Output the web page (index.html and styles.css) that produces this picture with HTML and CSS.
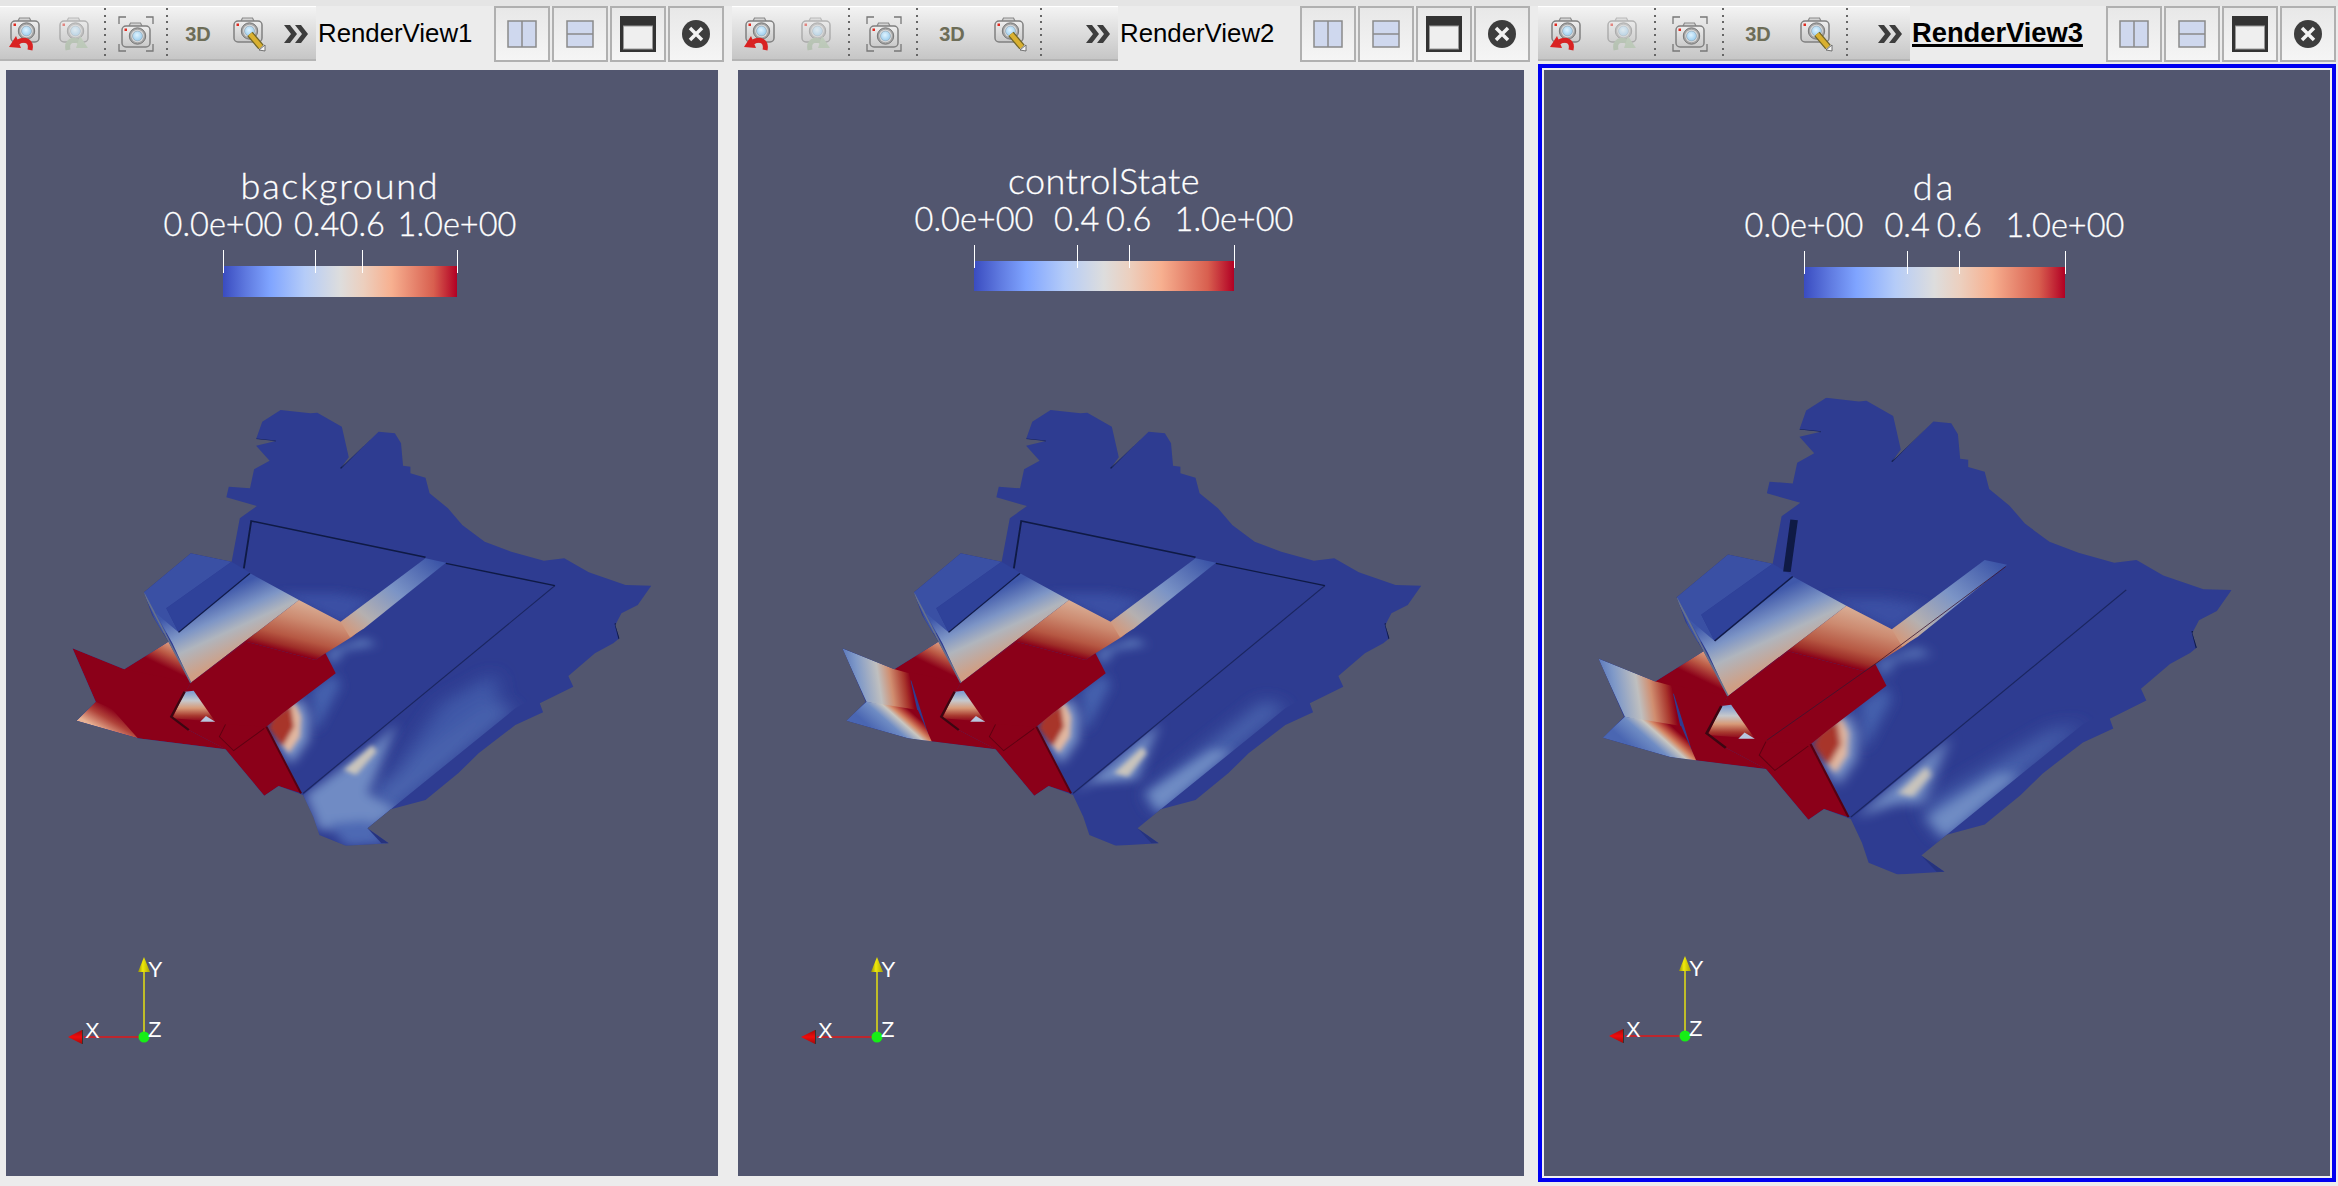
FILE: index.html
```html
<!DOCTYPE html>
<html lang="en">
<head>
    <meta charset="UTF-8">
    <title>ParaView RenderViews</title>
    <link rel="stylesheet" href="styles.css">
</head>
<body>
    <!-- shared drawings: toolbar icons, axes and the mesh -->
    <svg class="defs" aria-hidden="true">
        <defs>
            <linearGradient id="camBody" x1="0" y1="0" x2="0" y2="1">
                <stop offset="0" stop-color="#efefef"/>
                <stop offset="1" stop-color="#c9c9c9"/>
            </linearGradient>
            <radialGradient id="camLens" cx="0.45" cy="0.4" r="0.7">
                <stop offset="0" stop-color="#dff3ff"/>
                <stop offset="1" stop-color="#8fc6ea"/>
            </radialGradient>
            <symbol id="camera" viewBox="0 0 40 40">
                <path d="M13 8 L14.5 5 H24.5 L26 8" fill="#d4d4d4" stroke="#8a8a8a" stroke-width="1.2"/>
                <rect x="6" y="8" width="28" height="21" rx="4" fill="url(#camBody)" stroke="#808080" stroke-width="1.5"/>
                <rect x="8.5" y="10.5" width="2.5" height="2.5" fill="#e02a20"/>
                <circle cx="21.5" cy="18" r="8.2" fill="#a4a4a4" stroke="#777"/>
                <circle cx="21.5" cy="18" r="6.2" fill="#e2e2e2"/>
                <circle cx="21.5" cy="18" r="5" fill="url(#camLens)" stroke="#8b9aa6" stroke-width=".6"/>
            </symbol>

            <linearGradient id="coneY" x1="0" y1="0" x2="1" y2="0">
                <stop offset="0" stop-color="#8f8a10"/>
                <stop offset=".4" stop-color="#f0ea08"/>
                <stop offset="1" stop-color="#a8a20a"/>
            </linearGradient>
            <linearGradient id="coneX" x1="0" y1="0" x2="0" y2="1">
                <stop offset="0" stop-color="#a00c0c"/>
                <stop offset=".5" stop-color="#f00c0c"/>
                <stop offset="1" stop-color="#a00c0c"/>
            </linearGradient>
            <symbol id="triad" viewBox="0 0 110 90">
                <line x1="80" y1="15" x2="80" y2="80" stroke="#e6e010" stroke-width="1.5"/>
                <line x1="20" y1="80" x2="80" y2="80" stroke="#e01818" stroke-width="1.5"/>
                <polygon points="80,0 74,15 86,15" fill="url(#coneY)"/>
                <polygon points="4,80 18,73 18,87" fill="url(#coneX)"/>
                <line x1="18.500" y1="73" x2="18.500" y2="87" stroke="#333"/>
                <circle cx="80" cy="80" r="5.500" fill="#16ee16"/>
                <text x="84" y="20" class="axis-label">Y</text>
                <text x="21" y="81" class="axis-label">X</text>
                <text x="84" y="80" class="axis-label">Z</text>
            </symbol>

            <clipPath id="meshClip">
                <polygon points="565,90 638,100 655,98 715,140 732,232 712,265 805,155 845,160 860,190 865,257 883,260 883,280 920,293 930,340 975,385 1010,435 1065,485 1130,515 1210,542 1260,535 1320,577 1410,615 1473,617 1440,675 1400,700 1385,735 1395,775 1380,790 1335,820 1270,888 1282,920 1200,970 1208,997 1140,1035 1050,1120 1000,1180 920,1260 835,1288 778,1345 830,1390 725,1397 660,1365 645,1310 620,1245 560,1218 525,1247 430,1108 215,1075 65,1022 112,965 55,805 182,868 290,785 250,705 230,637 345,520 445,545 465,415 507,378 432,352 438,320 490,325 500,268 538,242 505,197 553,183 505,177 520,125"/>
            </clipPath>
            <clipPath id="lowerClip">
                <polygon points="620,1245 1237,617 1480,600 1400,800 1140,985 835,1288 778,1345 830,1400 660,1400"/>
            </clipPath>
            <filter id="softest" x="-50%" y="-50%" width="200%" height="200%">
                <feGaussianBlur stdDeviation="24"/>
            </filter>
            <filter id="soft" x="-50%" y="-50%" width="200%" height="200%">
                <feGaussianBlur stdDeviation="14"/>
            </filter>
            <filter id="softer" x="-50%" y="-50%" width="200%" height="200%">
                <feGaussianBlur stdDeviation="7"/>
            </filter>

            <linearGradient id="leftFace" gradientUnits="userSpaceOnUse" x1="325" y1="691" x2="414" y2="851">
                <stop offset="0" stop-color="#3f58aa"/>
                <stop offset=".35" stop-color="#7d95c6"/>
                <stop offset=".6" stop-color="#b0b5bd"/>
                <stop offset="1" stop-color="#cf9f85"/>
            </linearGradient>
            <linearGradient id="stripFace" gradientUnits="userSpaceOnUse" x1="945" y1="540" x2="730" y2="750">
                <stop offset="0" stop-color="#3d56a8"/>
                <stop offset=".45" stop-color="#7b94c6"/>
                <stop offset=".8" stop-color="#b5b0b0"/>
                <stop offset="1" stop-color="#d09a80"/>
            </linearGradient>
            <linearGradient id="mainFace" gradientUnits="userSpaceOnUse" x1="527" y1="634" x2="480" y2="785">
                <stop offset="0" stop-color="#d9ae96"/>
                <stop offset=".35" stop-color="#cc8a70"/>
                <stop offset=".7" stop-color="#b65843"/>
                <stop offset=".88" stop-color="#9e2e28"/>
                <stop offset="1" stop-color="#8b0019"/>
            </linearGradient>
            <linearGradient id="sideFace" gradientUnits="userSpaceOnUse" x1="300" y1="785" x2="262" y2="850">
                <stop offset="0" stop-color="#e0a88c"/>
                <stop offset=".5" stop-color="#bb5a45"/>
                <stop offset="1" stop-color="#8b0019"/>
            </linearGradient>
            <linearGradient id="holeFace" gradientUnits="userSpaceOnUse" x1="345" y1="935" x2="345" y2="1025">
                <stop offset="0" stop-color="#7f9dd0"/>
                <stop offset=".3" stop-color="#c6c8cc"/>
                <stop offset=".55" stop-color="#d79a78"/>
                <stop offset=".8" stop-color="#a83a30"/>
                <stop offset="1" stop-color="#8b0019"/>
            </linearGradient>
            <linearGradient id="cornerFace" gradientUnits="userSpaceOnUse" x1="110" y1="1040" x2="150" y2="985">
                <stop offset="0" stop-color="#e8b294"/>
                <stop offset=".55" stop-color="#b0433a"/>
                <stop offset="1" stop-color="#8b0019"/>
            </linearGradient>
            <linearGradient id="wedgeTop" gradientUnits="userSpaceOnUse" x1="60" y1="915" x2="222" y2="895">
                <stop offset="0" stop-color="#5472b8"/>
                <stop offset=".22" stop-color="#7f99c8"/>
                <stop offset=".52" stop-color="#bfbfbf"/>
                <stop offset=".7" stop-color="#d08e70"/>
                <stop offset=".9" stop-color="#a8352c"/>
                <stop offset="1" stop-color="#8b0019"/>
            </linearGradient>
            <linearGradient id="wedgeLow" gradientUnits="userSpaceOnUse" x1="140" y1="1060" x2="265" y2="945">
                <stop offset="0" stop-color="#4a66b2"/>
                <stop offset=".25" stop-color="#6f8cc4"/>
                <stop offset=".4" stop-color="#c9c6c0"/>
                <stop offset=".47" stop-color="#d58a68"/>
                <stop offset=".55" stop-color="#b53f36"/>
                <stop offset=".62" stop-color="#8b0019"/>
            </linearGradient>

            <!-- faces every view has, drawn below the per-view colouring -->
            <g id="meshBase">
                <rect width="1568" height="1470" fill="#2e3c91"/>
                <polygon points="230,637 345,520 445,545 285,685 315,757 270,760" fill="#3a50a4"/>
                <polygon points="285,685 445,545 490,578 315,757" fill="#2f429a"/>
                <g filter="url(#soft)">
                    <polygon points="680,815 770,775 800,795 720,810 690,860" fill="#5f7dbd"/>
                    <polygon points="640,930 700,880 710,920 650,1060" fill="#4560ad"/>
                    <polygon points="560,640 720,730 790,660 700,640" fill="#3a50a4"/>
                </g>
                <polygon points="230,637 250,690 315,757 490,580 610,660 345,908 300,790" fill="url(#leftFace)"/>
                <polygon points="610,660 712,725 770,740 740,770 675,820 650,840 480,785 345,908" fill="url(#mainFace)"/>
                <polygon points="712,725 920,535 970,548 770,745 735,772" fill="url(#stripFace)"/>
                <polygon points="182,868 290,785 345,908 200,900" fill="url(#sideFace)"/>
                <g filter="url(#soft)">
                    <polygon points="575,1000 615,950 635,1010 632,1080 590,1155 560,1090" fill="#7d97cb"/>
                </g>
                <g filter="url(#softer)">
                    <polygon points="565,1005 600,965 615,1010 612,1070 585,1120 550,1060" fill="#e2b8a0"/>
                    <polygon points="545,1010 590,975 598,1040 570,1100 535,1045" fill="#a8352c"/>
                </g>
            </g>

            <!-- red faces and the dark cuts on top -->
            <g id="meshFront">
                <polygon points="345,908 430,1000 450,1112 430,1108 340,1050 297,1010" fill="#8b0019"/>
                <polygon points="345,908 480,785 650,840 675,820 700,880 570,1000 530,1040 450,1112 415,1070 430,1033 385,1000 345,935" fill="#8b0019"/>
                <polygon points="430,1033 530,1040 615,1240 560,1218 525,1247 430,1108 415,1070" fill="#8b0019"/>
                <polygon points="330,935 352,932 405,1025 300,1015" fill="url(#holeFace)"/>
                <polygon points="368,1025 382,1008 405,1025" fill="#b8c6de"/>
                <polyline points="330,935 297,1010 340,1050" fill="none" stroke="#3c0612" stroke-width="6"/>
                <polyline points="530,1040 615,1240" fill="none" stroke="#560010" stroke-width="5"/>
                <polyline points="430,1033 415,1070 450,1112 525,1045" fill="none" stroke="#5e0012" stroke-width="2.500"/>
                <line x1="230" y1="640" x2="345" y2="908" stroke="#66718c" stroke-width="4"/>
                <line x1="490" y1="580" x2="315" y2="757" stroke="#101a48" stroke-width="3.500"/>
                <line x1="1237" y1="617" x2="620" y2="1240" stroke="#1b2660" stroke-width="3"/>
                <line x1="712" y1="265" x2="782" y2="178" stroke="#0f1a45" stroke-width="3"/>
                <line x1="1385" y1="730" x2="1395" y2="778" stroke="#0f1a45" stroke-width="4"/>
                <line x1="505" y1="177" x2="553" y2="183" stroke="#0f1a45" stroke-width="2"/>
                <polygon points="230,637 195,682 225,655" fill="#1a2556"/>
                <polygon points="778,1345 830,1390 812,1390" fill="#26337e"/>
            </g>
        </defs>
    </svg>

    <section class="pane pane-one">
        <header class="pane-head">
            <div class="toolbar toolbar-narrow">
                <span class="tool">
                    <svg class="tool-icon" viewBox="0 0 40 40"><use href="#camera" width="40" height="40"/><path d="M25 37 C27 28 20 25 13 29" fill="none" stroke="#d92222" stroke-width="5"/><polygon points="4,34 11,23 16,35" fill="#d92222"/></svg>
                </span>
                <span class="tool">
                    <svg class="tool-icon faded" viewBox="0 0 40 40"><use href="#camera" width="40" height="40"/><path d="M14 37 C12 28 19 25 26 29" fill="none" stroke="#9db596" stroke-width="5"/><polygon points="34,35 26,23 22,35" fill="#a9c2a2"/></svg>
                </span>
                <span class="dots"></span>
                <span class="tool">
                    <svg class="tool-icon" viewBox="0 0 40 40"><use href="#camera" y="5" width="40" height="40"/><path d="M3 11 V4 H10 M30 4 H37 V11 M3 31 V38 H10 M30 38 H37 V31" fill="none" stroke="#777" stroke-width="1.300"/></svg>
                </span>
                <span class="dots"></span>
                <span class="tool tool-3d">3D</span>
                <span class="tool">
                    <svg class="tool-icon" viewBox="0 0 40 40"><use href="#camera" width="40" height="40"/><line x1="22" y1="21" x2="33" y2="34" stroke="#6f6428" stroke-width="7"/><line x1="22" y1="21" x2="33" y2="34" stroke="#d9b030" stroke-width="4.500"/><polygon points="31,37 37,32 37,38" fill="#f4f4f4" stroke="#555" stroke-width=".8"/></svg>
                </span>
                <span class="more">
                    <svg class="more-icon" viewBox="0 0 26 20"><path d="M1 1 H7 L14 10 L7 19 H1 L8 10 Z M12 1 H18 L25 10 L18 19 H12 L19 10 Z" fill="#3d3d3d"/></svg>
                </span>
            </div>
            <span class="view-title">RenderView1</span>
            <div class="view-buttons">
                <button class="view-btn"><svg viewBox="0 0 36 36"><rect x="4" y="5" width="28" height="26" fill="#cfd8ee" stroke="#8a8a8a" stroke-width="1.500"/><line x1="18" y1="5" x2="18" y2="31" stroke="#8a8a8a" stroke-width="1.500"/></svg></button>
                <button class="view-btn"><svg viewBox="0 0 36 36"><rect x="5" y="5" width="26" height="26" fill="#cfd8ee" stroke="#8a8a8a" stroke-width="1.500"/><line x1="5" y1="18" x2="31" y2="18" stroke="#8a8a8a" stroke-width="1.500"/></svg></button>
                <button class="view-btn"><svg viewBox="0 0 36 36"><rect width="36" height="36" fill="#333"/><rect x="3.500" y="10" width="29" height="23" fill="#efefef" stroke="#999"/></svg></button>
                <button class="view-btn"><svg viewBox="0 0 36 36"><circle cx="18" cy="18" r="14" fill="#3d3d3d"/><path d="M12 12 L24 24 M24 12 L12 24" stroke="#f2f2f2" stroke-width="3.500"/></svg></button>
            </div>
        </header>
        <div class="view">
            <div class="colorbar bar-one">
                <div class="cb-title">background</div>
                <div class="cb-labels">
                    <span style="left:0%">0.0e+00</span>
                    <span style="left:40%">0.4</span>
                    <span style="left:59.500%">0.6</span>
                    <span style="left:100%">1.0e+00</span>
                </div>
                <div class="cb-scale">
                    <i style="left:0%"></i><i style="left:39.500%"></i><i style="left:59.500%"></i><i style="left:100%"></i>
                </div>
            </div>
            <svg class="mesh mesh-one" viewBox="0 0 1568 1470" preserveAspectRatio="none">
                <g clip-path="url(#meshClip)">
                    <use href="#meshBase"/>
                    <g clip-path="url(#lowerClip)">
                        <g filter="url(#softest)">
                            <polygon points="800,1340 1140,990 1080,960 880,1150 790,1230" fill="#4a64ae"/>
                            <polygon points="960,970 1090,880 1100,960 900,1130 840,1180" fill="#3f58a8"/>
                        </g>
                        <g filter="url(#soft)">
                            <polygon points="625,1245 800,1090 850,1030 800,1180 780,1240 850,1290 790,1345 700,1350 660,1350" fill="#6f8bc4"/>
                            <polygon points="680,1330 780,1320 830,1390 725,1397" fill="#4d69b4"/>
                        </g>
                        <g filter="url(#softer)">
                            <polygon points="720,1170 790,1095 800,1115 750,1185" fill="#c9c4bc"/>
                        </g>
                    </g>
                    <polygon points="55,805 182,868 345,908 300,1010 340,1050 430,1108 215,1075 112,965" fill="#8b0019"/>
                    <polygon points="65,1022 112,965 150,985 215,1075" fill="url(#cornerFace)"/>
                    <use href="#meshFront"/>
                    <polyline points="475,565 493,423 920,532" fill="none" stroke="#0f1a45" stroke-width="4.500"/>
                    <line x1="970" y1="550" x2="1237" y2="617" stroke="#0f1a45" stroke-width="4"/>
                </g>
            </svg>
            <svg class="triad triad-one"><use href="#triad" width="110" height="90"/></svg>
        </div>
    </section>

    <section class="pane pane-two">
        <header class="pane-head">
            <div class="toolbar toolbar-wide">
                <span class="tool">
                    <svg class="tool-icon" viewBox="0 0 40 40"><use href="#camera" width="40" height="40"/><path d="M25 37 C27 28 20 25 13 29" fill="none" stroke="#d92222" stroke-width="5"/><polygon points="4,34 11,23 16,35" fill="#d92222"/></svg>
                </span>
                <span class="tool">
                    <svg class="tool-icon faded" viewBox="0 0 40 40"><use href="#camera" width="40" height="40"/><path d="M14 37 C12 28 19 25 26 29" fill="none" stroke="#9db596" stroke-width="5"/><polygon points="34,35 26,23 22,35" fill="#a9c2a2"/></svg>
                </span>
                <span class="dots"></span>
                <span class="tool">
                    <svg class="tool-icon" viewBox="0 0 40 40"><use href="#camera" y="5" width="40" height="40"/><path d="M3 11 V4 H10 M30 4 H37 V11 M3 31 V38 H10 M30 38 H37 V31" fill="none" stroke="#777" stroke-width="1.300"/></svg>
                </span>
                <span class="dots"></span>
                <span class="tool tool-3d">3D</span>
                <span class="tool">
                    <svg class="tool-icon" viewBox="0 0 40 40"><use href="#camera" width="40" height="40"/><line x1="22" y1="21" x2="33" y2="34" stroke="#6f6428" stroke-width="7"/><line x1="22" y1="21" x2="33" y2="34" stroke="#d9b030" stroke-width="4.500"/><polygon points="31,37 37,32 37,38" fill="#f4f4f4" stroke="#555" stroke-width=".8"/></svg>
                </span>
                <span class="dots"></span>
                <span class="more">
                    <svg class="more-icon" viewBox="0 0 26 20"><path d="M1 1 H7 L14 10 L7 19 H1 L8 10 Z M12 1 H18 L25 10 L18 19 H12 L19 10 Z" fill="#3d3d3d"/></svg>
                </span>
            </div>
            <span class="view-title">RenderView2</span>
            <div class="view-buttons">
                <button class="view-btn"><svg viewBox="0 0 36 36"><rect x="4" y="5" width="28" height="26" fill="#cfd8ee" stroke="#8a8a8a" stroke-width="1.500"/><line x1="18" y1="5" x2="18" y2="31" stroke="#8a8a8a" stroke-width="1.500"/></svg></button>
                <button class="view-btn"><svg viewBox="0 0 36 36"><rect x="5" y="5" width="26" height="26" fill="#cfd8ee" stroke="#8a8a8a" stroke-width="1.500"/><line x1="5" y1="18" x2="31" y2="18" stroke="#8a8a8a" stroke-width="1.500"/></svg></button>
                <button class="view-btn"><svg viewBox="0 0 36 36"><rect width="36" height="36" fill="#333"/><rect x="3.500" y="10" width="29" height="23" fill="#efefef" stroke="#999"/></svg></button>
                <button class="view-btn"><svg viewBox="0 0 36 36"><circle cx="18" cy="18" r="14" fill="#3d3d3d"/><path d="M12 12 L24 24 M24 12 L12 24" stroke="#f2f2f2" stroke-width="3.500"/></svg></button>
            </div>
        </header>
        <div class="view">
            <div class="colorbar bar-two">
                <div class="cb-title">controlState</div>
                <div class="cb-labels">
                    <span style="left:0%">0.0e+00</span>
                    <span style="left:39.500%">0.4</span>
                    <span style="left:59.500%">0.6</span>
                    <span style="left:100%">1.0e+00</span>
                </div>
                <div class="cb-scale">
                    <i style="left:0%"></i><i style="left:39.500%"></i><i style="left:59.500%"></i><i style="left:100%"></i>
                </div>
            </div>
            <svg class="mesh mesh-two" viewBox="0 0 1568 1470" preserveAspectRatio="none">
                <g clip-path="url(#meshClip)">
                    <use href="#meshBase"/>
                    <g clip-path="url(#lowerClip)">
                        <g filter="url(#softest)">
                            <polygon points="830,1300 1140,985 1090,960 800,1240" fill="#4863ae"/>
                        </g>
                        <g filter="url(#soft)">
                            <polygon points="623,1240 831,1030 776,1200 667,1210" fill="#6f8bc4"/>
                            <polygon points="830,1300 1010,1110 960,1110 800,1240" fill="#6f8cc4"/>
                        </g>
                        <g filter="url(#softer)">
                            <polygon points="720,1180 790,1100 800,1120 755,1190" fill="#c9c4bc"/>
                        </g>
                    </g>
                    <polygon points="183,868 345,908 300,1010 340,1050 430,1108 271,1085 218,880" fill="#8b0019"/>
                    <polygon points="54,805 183,868 218,880 240,1000 114,965" fill="url(#wedgeTop)"/>
                    <polygon points="114,965 63,1022 215,1075 275,1088 240,990" fill="url(#wedgeLow)"/>
                    <use href="#meshFront"/>
                    <polyline points="475,565 493,423 920,532" fill="none" stroke="#0f1a45" stroke-width="4.500"/>
                    <line x1="970" y1="550" x2="1237" y2="617" stroke="#0f1a45" stroke-width="4"/>
                </g>
            </svg>
            <svg class="triad triad-two"><use href="#triad" width="110" height="90"/></svg>
        </div>
    </section>

    <section class="pane pane-three">
        <header class="pane-head">
            <div class="toolbar toolbar-active">
                <span class="tool">
                    <svg class="tool-icon" viewBox="0 0 40 40"><use href="#camera" width="40" height="40"/><path d="M25 37 C27 28 20 25 13 29" fill="none" stroke="#d92222" stroke-width="5"/><polygon points="4,34 11,23 16,35" fill="#d92222"/></svg>
                </span>
                <span class="tool">
                    <svg class="tool-icon faded" viewBox="0 0 40 40"><use href="#camera" width="40" height="40"/><path d="M14 37 C12 28 19 25 26 29" fill="none" stroke="#9db596" stroke-width="5"/><polygon points="34,35 26,23 22,35" fill="#a9c2a2"/></svg>
                </span>
                <span class="dots"></span>
                <span class="tool">
                    <svg class="tool-icon" viewBox="0 0 40 40"><use href="#camera" y="5" width="40" height="40"/><path d="M3 11 V4 H10 M30 4 H37 V11 M3 31 V38 H10 M30 38 H37 V31" fill="none" stroke="#777" stroke-width="1.300"/></svg>
                </span>
                <span class="dots"></span>
                <span class="tool tool-3d">3D</span>
                <span class="tool">
                    <svg class="tool-icon" viewBox="0 0 40 40"><use href="#camera" width="40" height="40"/><line x1="22" y1="21" x2="33" y2="34" stroke="#6f6428" stroke-width="7"/><line x1="22" y1="21" x2="33" y2="34" stroke="#d9b030" stroke-width="4.500"/><polygon points="31,37 37,32 37,38" fill="#f4f4f4" stroke="#555" stroke-width=".8"/></svg>
                </span>
                <span class="dots"></span>
                <span class="more">
                    <svg class="more-icon" viewBox="0 0 26 20"><path d="M1 1 H7 L14 10 L7 19 H1 L8 10 Z M12 1 H18 L25 10 L18 19 H12 L19 10 Z" fill="#3d3d3d"/></svg>
                </span>
            </div>
            <span class="view-title view-title-active">RenderView3</span>
            <div class="view-buttons">
                <button class="view-btn"><svg viewBox="0 0 36 36"><rect x="4" y="5" width="28" height="26" fill="#cfd8ee" stroke="#8a8a8a" stroke-width="1.500"/><line x1="18" y1="5" x2="18" y2="31" stroke="#8a8a8a" stroke-width="1.500"/></svg></button>
                <button class="view-btn"><svg viewBox="0 0 36 36"><rect x="5" y="5" width="26" height="26" fill="#cfd8ee" stroke="#8a8a8a" stroke-width="1.500"/><line x1="5" y1="18" x2="31" y2="18" stroke="#8a8a8a" stroke-width="1.500"/></svg></button>
                <button class="view-btn"><svg viewBox="0 0 36 36"><rect width="36" height="36" fill="#333"/><rect x="3.500" y="10" width="29" height="23" fill="#efefef" stroke="#999"/></svg></button>
                <button class="view-btn"><svg viewBox="0 0 36 36"><circle cx="18" cy="18" r="14" fill="#3d3d3d"/><path d="M12 12 L24 24 M24 12 L12 24" stroke="#f2f2f2" stroke-width="3.500"/></svg></button>
            </div>
        </header>
        <div class="view-frame">
            <div class="view">
                <div class="colorbar bar-three">
                    <div class="cb-title">da</div>
                    <div class="cb-labels">
                        <span style="left:0%">0.0e+00</span>
                        <span style="left:39.500%">0.4</span>
                        <span style="left:59.500%">0.6</span>
                        <span style="left:100%">1.0e+00</span>
                    </div>
                    <div class="cb-scale">
                        <i style="left:0%"></i><i style="left:39.500%"></i><i style="left:59.500%"></i><i style="left:100%"></i>
                    </div>
                </div>
                <svg class="mesh mesh-three" viewBox="0 0 1568 1470" preserveAspectRatio="none">
                    <g clip-path="url(#meshClip)">
                        <use href="#meshBase"/>
                        <g clip-path="url(#lowerClip)">
                            <g filter="url(#softest)">
                                <polygon points="830,1300 1140,985 1072,1000 782,1212" fill="#4863ae"/>
                            </g>
                            <g filter="url(#soft)">
                                <polygon points="632,1240 842,1020 782,1203 722,1203" fill="#6f8bc4"/>
                                <polygon points="830,1300 1000,1120 950,1120 790,1240" fill="#6f8cc4"/>
                            </g>
                            <g filter="url(#softer)">
                                <polygon points="725,1175 790,1100 800,1125 760,1185" fill="#c9c4bc"/>
                            </g>
                        </g>
                        <polygon points="183,868 345,908 300,1010 340,1050 430,1108 271,1085 218,880" fill="#8b0019"/>
                        <polygon points="54,805 183,868 218,880 240,1000 114,965" fill="url(#wedgeTop)"/>
                        <polygon points="114,965 63,1022 215,1075 275,1088 240,990" fill="url(#wedgeLow)"/>
                        <use href="#meshFront"/>
                        <line x1="493" y1="425" x2="477" y2="567" stroke="#0f1a45" stroke-width="17"/>
                        <polyline points="967,553 677,818 432,1029" fill="none" stroke="#3a1530" stroke-width="2"/>
                    </g>
                </svg>
                <svg class="triad triad-three"><use href="#triad" width="110" height="90"/></svg>
            </div>
        </div>
    </section>
</body>
</html>
```

FILE: styles.css
```css
html, body {
    margin: 0;
    height: 100%;
}

body {
    display: flex;
    height: 1186px;
    overflow: hidden;
    background: #ececec;
    font-family: "Liberation Sans", Arial, sans-serif;
}

.defs {
    position: absolute;
    width: 0;
    height: 0;
}

.pane {
    display: flex;
    flex-direction: column;
    flex: none;
    border-top: 6px solid #e5e5e5;
    box-sizing: border-box;
}

.pane-one { width: 732px; }
.pane-two { width: 806px; }
.pane-three { width: 800px; }

.pane-head {
    display: flex;
    align-items: flex-start;
    height: 56px;
    flex: none;
}

.toolbar {
    display: grid;
    align-items: center;
    flex: none;
    height: 53px;
    border-bottom: 2px solid #b4b4b4;
    background: linear-gradient(to bottom, #f4f4f4, #c6c6c6);
    box-shadow: inset 0 1px 0 #fff;
}

.toolbar-narrow {
    width: 316px;
    grid-template-columns: 49px 50px 12px 50px 12px 50px 50px 1fr;
}

.toolbar-wide {
    width: 386px;
    grid-template-columns: 56px 56px 10px 60px 6px 64px 50px 14px 1fr;
}

.toolbar-active {
    width: 372px;
    grid-template-columns: 56px 56px 10px 60px 6px 64px 50px 14px 1fr;
}

.tool {
    display: flex;
    justify-content: center;
    align-items: center;
}

.tool-icon {
    width: 40px;
    height: 40px;
    margin-top: 1px;
}

.faded {
    opacity: .5;
}

.tool-3d {
    padding-top: 4px;
    font-size: 20px;
    font-weight: bold;
    color: #6d6d58;
}

.dots {
    justify-self: center;
    width: 2px;
    height: 50px;
    background: repeating-linear-gradient(to bottom, #666 0, #666 2px, transparent 2px, transparent 6.600px);
}

.more {
    display: flex;
    justify-content: flex-end;
    padding: 3px 6px 0 0;
}

.more-icon {
    width: 28px;
    height: 20px;
}

.view-title {
    margin-left: 2px;
    font-size: 25.800px;
    line-height: 54px;
    color: #000;
}

.view-title-active {
    font-size: 27.300px;
    font-weight: bold;
    text-decoration: underline;
    text-decoration-thickness: 3px;
}

.view-buttons {
    display: flex;
    gap: 2px;
    margin-left: auto;
    margin-right: 8px;
}

.pane-three .view-buttons {
    margin-right: 2px;
}

.view-btn {
    display: flex;
    justify-content: center;
    align-items: center;
    width: 56px;
    height: 56px;
    padding: 0;
    border: 2px solid #b0b0b0;
    background: linear-gradient(to bottom, #e8e8e8, #f5f5f5);
}

.view-btn svg {
    width: 36px;
    height: 36px;
}

.view {
    position: relative;
    flex: none;
    height: 1106px;
    margin: 8px 14px 0 6px;
    overflow: hidden;
    background: #52566f;
}

.view-frame {
    flex: none;
    margin: 2px 2px 0 0;
    border: 4px solid #0000f0;
    outline: 2px solid #f0f0f0;
    outline-offset: -6px;
}

.view-frame .view {
    margin: 2px;
}

/* colour legend floating over the view */
.colorbar {
    position: absolute;
    color: #fff;
    font-family: Lato, "Liberation Sans", sans-serif;
    font-weight: 300;
    -webkit-text-stroke: .3px #fff;
}

.bar-one { left: 217px; top: 98px; width: 234px; }
.bar-two { left: 236px; top: 93px; width: 260px; }
.bar-three { left: 260px; top: 99px; width: 261px; }

.cb-title {
    display: flex;
    justify-content: center;
    height: 40px;
    font-size: 36px;
    line-height: 34px;
    letter-spacing: 1.800px;
    white-space: nowrap;
}

.bar-two .cb-title {
    letter-spacing: .4px;
}

.bar-three .cb-title {
    letter-spacing: 3px;
}

.cb-labels {
    position: relative;
    height: 34px;
    font-size: 32.500px;
    line-height: 32px;
}

.cb-labels span {
    position: absolute;
    transform: translateX(-50%);
    white-space: nowrap;
}

.cb-scale {
    position: relative;
    height: 31px;
    margin-top: 24px;
    background: linear-gradient(to right, #3a4cc0 0%, #5f7ae0 10%, #7fa4ff 20%, #b5ccf8 35%, #dddddd 50%, #eccfbe 60%, #f7b090 72%, #d85f4f 90%, #b20024 100%);
}

.bar-two .cb-scale {
    height: 30px;
}

.cb-scale i {
    position: absolute;
    top: -16px;
    width: 1px;
    height: 23px;
    background: #fff;
}

.mesh {
    position: absolute;
    width: 640px;
    height: 490px;
}

.mesh-one { left: 44px; top: 310px; }
.mesh-two { left: 81.500px; top: 310px; }
.mesh-three { left: 30px; top: 295px; width: 700px; height: 536px; }

.triad {
    position: absolute;
    width: 110px;
    height: 90px;
}

.triad-one { left: 58px; top: 887px; }
.triad-two { left: 59px; top: 887px; }
.triad-three { left: 61px; top: 886px; }

.axis-label {
    font-family: "Liberation Sans", Arial, sans-serif;
    font-size: 22px;
    fill: #fff;
}
```
